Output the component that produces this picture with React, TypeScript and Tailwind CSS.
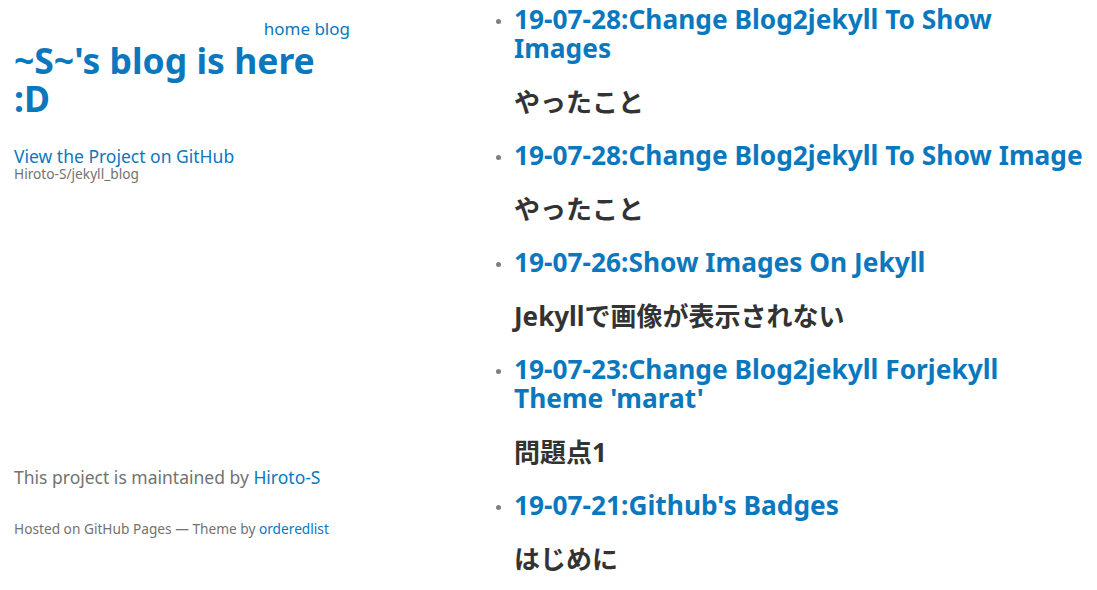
const posts = [
  { title: "19-07-28:Change Blog2jekyll To Show Images", excerpt: "やったこと" },
  { title: "19-07-28:Change Blog2jekyll To Show Image", excerpt: "やったこと" },
  { title: "19-07-26:Show Images On Jekyll", excerpt: "Jekyllで画像が表示されない" },
  { title: "19-07-23:Change Blog2jekyll Forjekyll Theme 'marat'", excerpt: "問題点1" },
  { title: "19-07-21:Github's Badges", excerpt: "はじめに" },
];

const App = () => {
  return (
    <div className="flex w-[1097px] h-[590px] overflow-hidden bg-white text-[#727272] font-['Noto_Sans','Noto_Sans_CJK_JP',sans-serif]">
      {/* header / sidebar */}
      <header className="w-[350px] shrink-0 pl-[14px] pt-[19px] flex flex-col">
        <nav className="text-right text-[17px] leading-[20px] text-[#0b78bd]">
          <a href="#">home</a> <a href="#">blog</a>
        </nav>
        <h1 className="mt-[2px] text-[35.5px] leading-[38px] font-bold text-[#0b78bd]">
          <a href="#">~S~'s blog is here :D</a>
        </h1>
        <p className="mt-[30px] text-[17.5px] leading-[18px] text-[#0b78bd]">
          <a href="#">View the Project on GitHub</a>
        </p>
        <small className="mt-px text-[13.7px] leading-[15px] text-[#727272]">Hiroto-S/jekyll_blog</small>

        <p className="mt-[285px] text-[17.5px] leading-[22px]">
          This project is maintained by <a href="#" className="text-[#0b78bd]">Hiroto-S</a>
        </p>
        <p className="mt-[33px] text-[13.7px] leading-[16px]">
          Hosted on GitHub Pages — Theme by <a href="#" className="text-[#0b78bd]">orderedlist</a>
        </p>
      </header>

      {/* post list */}
      <section className="pl-[146px] pt-[5px]">
        <ul className="flex flex-col gap-6">
          {posts.map((p, i) => (
            <li key={i} className="flex flex-col gap-6">
              <div className="flex gap-[13px]">
                <span className="mt-[14px] w-[5px] h-[5px] rounded-full bg-[#7f7f7f] shrink-0" />
                <h2 className="w-[574px] text-[26.3px] leading-[29px] font-bold text-[#0b78bd]">
                  <a href="#">{p.title}</a>
                </h2>
              </div>
              <h3 className="pl-[18px] text-[26px] leading-[30px] font-bold text-[#333]">{p.excerpt}</h3>
            </li>
          ))}
        </ul>
      </section>
    </div>
  );
};

export default App;
